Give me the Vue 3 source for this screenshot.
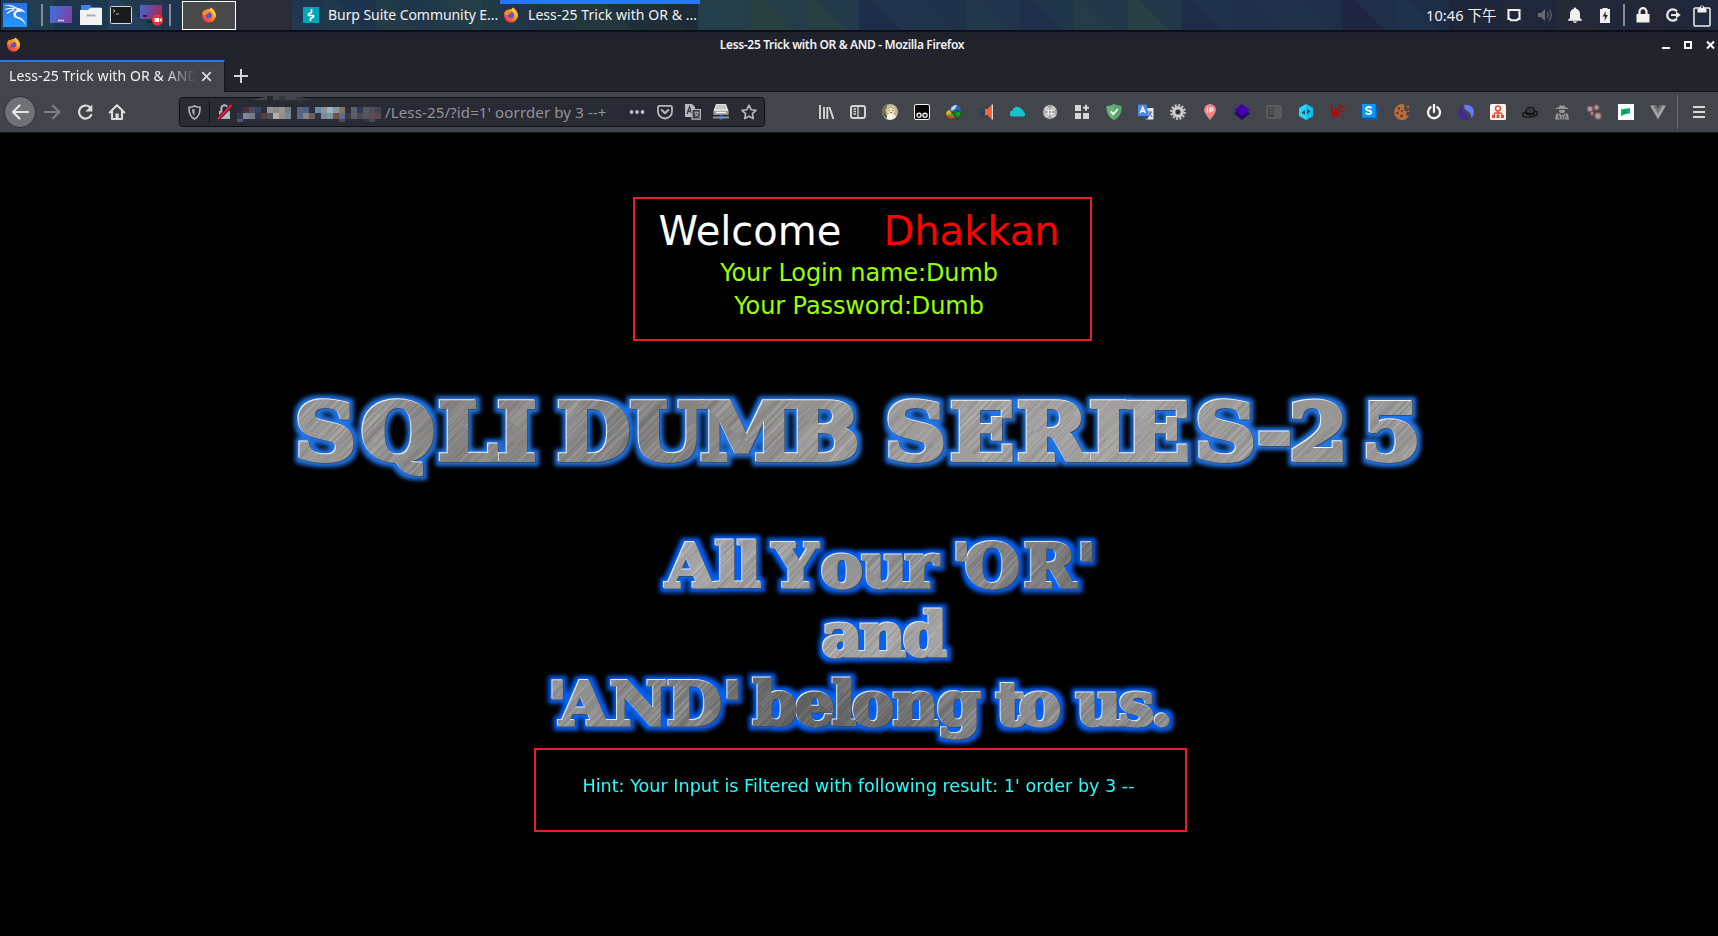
<script setup>
const cells = [
  ['#1f3a55', '#213d50'], ['#1e3350', '#20384c'], ['#24405c', '#213a4c'], ['#1f344d', '#23394a'],
  ['#2a2b38', '#2a2b38'], ['#203a50', '#1f3550'], ['#21394c', '#1e344e'], ['#243c48', '#20364a'],
  ['#203a4a', '#243d47'], ['#223a48', '#20344a'], ['#20343f', '#22373e'], ['#22383d', '#1d313d'],
  ['#1f3039', '#1d2c38'], ['#22404c', '#263e48'], ['#28403f', '#243b48'], ['#273e43', '#223a4b'],
  ['#1e2d4a', '#20344c'], ['#20344b', '#1f3149'], ['#22394b', '#20344b'], ['#1f2e4a', '#20364b'],
  ['#263b48', '#22374a'], ['#283f44', '#23374a'], ['#1f2d49', '#20324b'], ['#1f2f4a', '#203149'],
  ['#20314a', '#1f2f48'], ['#1f2441', '#1f2f4a'], ['#1f324c', '#1f2c48'], ['#20263a', '#1f2639'],
  ['#23273a', '#20273a'], ['#262a36', '#23283a'], ['#20273b', '#242836'], ['#212738', '#20283d'], ['#1f2840', '#1d2540'],
].map((c, i) => ({ x: 1342 - 53.65 * 25 + 53.65 * i, a: c[0], b: c[1] }))

const blurCols = [
  ['#2b2d38', '#35394a', '#4b5a7c'], ['#4f3039', '#7d8597', '#2b3042'], ['#494b5e', '#777b8d', '#2b2d38'],
  ['#36435b', '#343745', '#2b2d38'], ['#2b2d38', '#56413f', '#2b2d38'], ['#929497', '#554f58', '#2b2d38'],
  ['#898a8e', '#b6adab', '#2b2d38'], ['#9a948e', '#988d86', '#2b2d38'], ['#777b88', '#718b9c', '#2b2d38'],
  ['#292b36', '#292b36', '#292b36'], ['#5a6579', '#596780', '#292b36'], ['#44658a', '#898481', '#292b36'],
  ['#2b2d38', '#6d5c5e', '#292b36'], ['#698bae', '#2e3446', '#292b36'], ['#8e9590', '#778e99', '#292b36'],
  ['#9bb5c8', '#7d969e', '#292b36'], ['#8697aa', '#6c5146', '#292b36'], ['#887564', '#66698a', '#4a4b60'],
  ['#2b2d38', '#3b3c45', '#292b36'], ['#58606c', '#5c5f67', '#292b36'], ['#303b51', '#464c58', '#292b36'],
  ['#565763', '#54535b', '#34323b'], ['#4e4f58', '#5a4f55', '#454652'], ['#43454d', '#5a4a4c', '#292b36'],
]

// Brushed-steel grain: thin strokes with pseudo-random spacing and strength
const grain = []
let seed = 7
const rnd = () => (seed = (seed * 16807) % 2147483647) / 2147483647
for (let x = 0; x < 211; x += 0.7 + rnd() * 1.1) {
  grain.push({ x: x.toFixed(2), y: Math.round(rnd() * 40), h: 30 + Math.round(rnd() * 60), w: (0.4 + rnd() * 0.5).toFixed(2), f: rnd() > 0.5 ? '#fff' : '#222', o: (0.05 + rnd() * 0.19).toFixed(2) })
}

const BIG = 1.09
const SUB = 1.05
const place = (xs, k) => xs.map((x) => (x / k).toFixed(2)).join(' ')
const title = place([295, 361, 438, 497, 540, 557, 630, 700, 788, 870, 885, 950, 1017, 1089, 1125, 1195, 1257, 1289, 1362], BIG)
const lines = [
  { y: 587.5, t: "All Your 'OR'", x: [666, 715, 737, 760, 773, 821, 862, 905, 940, 952, 965, 1024, 1077] },
  { y: 656.5, t: 'and', x: [822, 860, 903] },
  { y: 725.5, t: "'AND' belong to us.", x: [548, 560, 610, 667, 723, 740, 753, 795, 832, 852, 893, 937, 985, 996, 1019, 1060, 1076, 1119, 1151] },
].map((l) => ({ ...l, x: place(l.x, SUB) }))

const fox = `<circle cx="8" cy="8.8" r="6.8" fill="url(#ffo)"/><circle cx="7.8" cy="8.2" r="3.1" fill="#5a55c8"/><path d="M1 7C2 4 3 3 4 3l1.400 1.800C7 4.500 8 5.500 8.500 6.500 7 6.200 5.500 7 5.300 8 3.500 8 2 8 1 7z" fill="#ff8a2a"/><path d="M9.600.5C13 2 15.500 6 14.700 10.500 14 9.500 13.500 8.500 12.500 8 12 5.500 9.500 5.500 8.800 3.500 8.500 2.500 9 1.200 9.600.5z" fill="#ffc83c"/>`

const nav = [
  { k: 'back', s: '<circle cx="16" cy="16" r="15.600" fill="#707176" stroke="#303137"/><path d="M24 16H9m6.500-6.500L9 16l6.500 6.500" fill="none" stroke="#e4e4e2" stroke-width="2.200" stroke-linecap="round" stroke-linejoin="round"/>' },
  { k: 'forward', s: '<path d="M9 16h14m-6-6.300L23.300 16 17 22.300" fill="none" stroke="#7f8084" stroke-width="2.100" stroke-linecap="round" stroke-linejoin="round"/>' },
  { k: 'reload', s: '<path d="M22.300 19a6.500 6.500 0 1 1-1.300-7.700" fill="none" stroke="#dcdcdb" stroke-width="2.200" stroke-linecap="round"/><path d="M23.400 8.500v7h-7z" fill="#dcdcdb"/>' },
  { k: 'home', s: '<path d="M8.700 16.500 16 9.300l7.300 7.200M11 15v8h10v-8" fill="none" stroke="#dcdcdb" stroke-width="2.100" stroke-linecap="round" stroke-linejoin="round"/><path d="M14.500 17.500h3.200V23h-3.200z" fill="#dcdcdb"/>' },
]

const urlActions = [
  '<g fill="#bdbdc1"><circle cx="2.500" cy="8" r="1.900"/><circle cx="8" cy="8" r="1.900"/><circle cx="13.500" cy="8" r="1.900"/></g>',
  '<path d="M2.500 1.800h11q1.500 0 1.500 1.500V7.500a7 7 0 0 1-14 0V3.300q0-1.500 1.500-1.500z" fill="none" stroke="#b7b7bb" stroke-width="1.800"/><path d="M4.700 6 8 9.200 11.300 6" fill="none" stroke="#b7b7bb" stroke-width="2" stroke-linecap="round" stroke-linejoin="round"/>',
  '<path d="M0 0h7l3 3v10H0z" fill="#b9b9bd"/><path d="m2 10 2.500-7L7 10M3 7.500h3" fill="none" stroke="#3b3c45" stroke-width="1.300"/><path d="M7 5.500h8.300v9.700H7z" fill="#3b3c45" stroke="#b9b9bd" stroke-width="1.200"/><path d="M9 8.200h4.300q-.5 2.700-3.500 4M10 9q1 2.500 3.500 3.500" fill="none" stroke="#b9b9bd"/>',
  '<path d="M3 0h10l2.300 6v4.500H.7V6z" fill="#dedede"/><path d="M3.500 2h9M3 4h10" stroke="#b0b0b0"/><path d="M.5 7h15v3.500H.5z" fill="#9c9c9f"/><path d="M3 8.500h10" stroke="#f4f4f4" stroke-width="1.300"/><path d="M0 13.500h16" stroke="#8f9093" stroke-width="2"/><circle cx="8" cy="13.500" r="2" fill="#4487e8"/>',
  '<path d="m8 1.200 2.100 4.500 4.900.6-3.600 3.400.9 4.900L8 12.200l-4.300 2.400.9-4.900L1 6.300l4.900-.6z" fill="none" stroke="#b9b9bd" stroke-width="1.600" stroke-linejoin="round"/>',
]

const ext = [
  '<path d="M2 1v14M6 3v12M9.300 3v12M11.300 3l4.200 12" fill="none" stroke="#d4d4d2" stroke-width="1.900"/>',
  '<rect x="1" y="2" width="14" height="12" rx="2" fill="none" stroke="#d4d4d2" stroke-width="2"/><path d="M8 2v12M3.500 5h2.500M3.500 7.500h2.500M3.500 10h2.500" stroke="#d4d4d2" stroke-width="1.300"/>',
  '<circle cx="8" cy="8" r="8" fill="#b9b596"/><path d="M0 9q.5-6 5-8.500L4.500 4 3 6l1 3-2 4Q0 11 0 9z" fill="#6b6f4b"/><circle cx="9" cy="6" r="4.200" fill="#efe3b4"/><path d="M5.500 10.500 9 9.500l4 1.500 1 2q-5 4.500-9.500 1.500z" fill="#f6f1e6"/><path d="m5.500 5 3-2.500L12.500 5M6.500 6.500h1.500m2.500 0h1.500M8 8.500h2" fill="none" stroke="#85835c"/><path d="M2 11l2-1 1 3-1 1.500z" fill="#4f4b36"/>',
  '<rect x=".5" y=".5" width="15" height="15" rx="1.500" fill="#050505" stroke="#f5f5f5"/><circle cx="5" cy="11.200" r="2.100" fill="#222" stroke="#fff" stroke-width="1.200"/><circle cx="11" cy="11.200" r="2.100" fill="#222" stroke="#fff" stroke-width="1.200"/>',
  '<path d="M0 9Q2 5 6 6l1 6-3 1Q0 12 0 9z" fill="#e8b800"/><path d="M0 9.500Q1 15 6.500 15l3-2L7 11 2 12z" fill="#cd3827"/><path d="M1.500 10.500Q4 14 8 12.500l-2-3z" fill="#49a32c"/><circle cx="9.500" cy="6" r="5.400" fill="#3563b4"/><path d="M5 4.500q2-4 6-3.500L9 5 5.500 7z" fill="#b8dcf2"/><path d="M6 8.500 11 8V6l5 3-4.500 6.500-1-3.500z" fill="#16a019" stroke="#073d0a" stroke-width=".7"/>',
  '<path d="M13.500 1v14L9.500 11H6.500V5h3z" fill="#f5643a"/><path d="M14.300 .5v15" stroke="#d9d9d9" stroke-width="1.400"/><circle cx="3" cy="7" r="2.200" fill="none" stroke="#29435a" stroke-width="1.600"/><path d="M5 5.500h2v5H5zM3.500 9.500h2.800v4.500H3.700z" fill="#29435a"/>',
  '<path d="M3 12.500a3 3 0 0 1-.5-6 4.800 4.800 0 0 1 8.700-1.700 3.800 3.800 0 0 1 2.500 3.400 2.200 2.200 0 0 1-.5 4.300z" fill="#18c2c9"/>',
  '<circle cx="8" cy="8" r="7.200" fill="#a9a9a9"/><path d="M6.300 6.300h3.400v3.400H6.300zM6.300 6.300H5A1.500 1.500 0 1 1 6.300 5zM9.700 6.300V5A1.500 1.500 0 1 1 11 6.300zM9.700 9.700H11A1.500 1.500 0 1 1 9.700 11zM6.300 9.700V11A1.500 1.500 0 1 1 5 9.700z" fill="none" stroke="#f0f0f0" stroke-width="1"/>',
  '<path d="M1 1h6v6H1zM1 9h6v6H1zM9 9h6v6H9z" fill="#d6d6d5"/><path d="M12 .7v6M9 3.700h6" stroke="#d6d6d5" stroke-width="2"/>',
  '<path d="M8 0q3 2 7.500 2Q16 12 8 16 0 12 .5 2 5 2 8 0z" fill="#67b279"/><path d="M8 0q3 2 7.500 2Q16 12 8 16z" fill="#5ca66d"/><path d="m4.700 7.500 2.700 2.700L11.700 5" fill="none" stroke="#fff" stroke-width="1.800"/>',
  '<path d="M6 4h9.500v11.500H8z" fill="#e3e5e8"/><path d="M0 .5h8.500L11 12H0z" fill="#4889ef"/><path d="m2.200 9 2.500-6 2.500 6M3 7.300h3.500" fill="none" stroke="#fff" stroke-width="1.400"/><path d="M9 8h5m-1 0q-.5 3-3 4m1-3 3 4" fill="none" stroke="#4668b9"/><path d="M5.500 12H11l-2 3.500z" fill="#204aa3"/>',
  '<circle cx="8" cy="8" r="6.700" fill="none" stroke="#c6c6c6" stroke-width="2.400" stroke-dasharray="2 1.508"/><circle cx="8" cy="8" r="4.300" fill="#5e5e5e" stroke="#cfcfcf" stroke-width="3"/><circle cx="8" cy="8" r="2" fill="#292a2d"/>',
  '<path d="M8 16Q2 9 2 6a6 6 0 0 1 12 0q0 3-6 10z" fill="#f28283"/><path d="M5.500 3.800v4.700M8 8.700V4h1.500a1.300 1.300 0 0 1 0 2.800H8" fill="none" stroke="#fff" stroke-width="1.200"/>',
  '<path d="m8 4 8 5.500L8 16 0 9.500z" fill="#20086e"/><path d="m8 0 8 6-8 6-8-6z" fill="#4400ad"/>',
  '<rect x=".7" y="1.700" width="14.600" height="12.600" rx="2" fill="#595a5b" stroke="#5e5f62" stroke-width="1.200"/><path d="M2 3h6v10H2z" fill="#424347"/><path d="M3 4.500h4M3 7h4M3 9.500h4" stroke="#626264"/>',
  '<path d="m8 0 7 4v8l-7 4-7-4V4z" fill="#21d7ff"/><path d="m8 0 7 4v8l-7 4z" fill="#15bfe9"/><path d="M3.500 8.500 7 6v5zM12.500 7.500 9 10V5z" fill="#293f51"/>',
  '<path d="m.8 2 2.500 11L5.500 5l2.300 8L10 2M0 2h2.500M9 2h3" fill="none" stroke="#aa0b0d" stroke-width="1.700"/><path d="M11.500 3H16M11.500 7H14M11 12.500h3" stroke="#aa0b0d" stroke-width="1.500"/>',
  '<path d="M2 2h14v14H2z" fill="#0560b0"/><path d="M0 0h13.500v13.500H0z" fill="#0798ff"/><path d="M9.500 4.200Q9 3 6.800 3C3 3 3.300 6 6.500 6.500 10.500 7 10 10.200 6.500 10.200 4.500 10.200 4 9 3.800 8.500" fill="none" stroke="#fff" stroke-width="1.800"/>',
  '<path d="M9.500.2a8 8 0 1 0 5.500 12l-2.500-.7-.5-2.500 2-1.500-3.500-.8-.7-2.700 1.200-1.500z" fill="#b96c3a"/><g fill="#603318"><circle cx="5" cy="4.500" r="1.200"/><circle cx="8" cy="7" r="1.100"/><circle cx="3.500" cy="9" r="1.200"/><circle cx="7.500" cy="12" r="1.300"/></g><path d="M13 2h2v2h-2zM14 6.500h1.500V8H14z" fill="#b96c3a"/>',
  '<path d="M4.600 3.300a6 6 0 1 0 6.800 0M8 .5v7.500" fill="none" stroke="#f4f4f4" stroke-width="2.300" stroke-linecap="round"/>',
  '<path d="M4.500 2Q-1.500 6 1 12q3 5 8.500 3.500Q12 14 8.500 11 3 7.500 4.500 2z" fill="#41279b"/><path d="M6.500.8Q14 0 16 7q0 5-3 7 1-4-3-6.500Q5 4.500 6.500.8z" fill="#6779ff"/>',
  '<rect width="16" height="16" rx="1.500" fill="#fff5f1"/><circle cx="8" cy="4.600" r="2.500" fill="none" stroke="#e84d31" stroke-width="1.500"/><path d="M8 7v4M3.500 11.500 5 9h6l1.500 2.500" fill="none" stroke="#e84d31" stroke-width="1.300"/><path d="M2 11h3v3H2zM6.500 11h3v3h-3zM11 11h3v3h-3z" fill="#e84d31"/>',
  '<ellipse cx="8" cy="10" rx="7.700" ry="2.900" fill="none" stroke="#101010" stroke-width="1.300" transform="rotate(-8 8 10)"/><path d="M4 10 4.500 5q0-1.500 3.500-1.500h2q2 0 2 1.500l.5 4.500Q8 12.500 4 10z" fill="#393a3b" stroke="#0f0f0f"/><path d="M4 8q4 2 8.500 0v2.500H4z" fill="#111"/>',
  '<path d="M6 .8 8 2l2-1.200.8 2.200L14 4v1H2V4l3.200-1z" fill="#989898"/><path d="M5 6h6v1.500L9.500 9h-3L5 7.500zM2 10l3-1 3 2.500L11 9l3 1 1 5.500H1z" fill="#989898"/><path d="m4.500 9.500 1.500 6M11.500 9.500l-1.500 6M8 11.500v4M3 13h2m6 0h2" stroke="#4e4e50" stroke-width="1"/>',
  '<g fill="#a1a0a1" stroke="#854e51" stroke-width="1.300"><circle cx="4" cy="5" r="3"/><circle cx="10.500" cy="3.500" r="2.600"/><circle cx="6" cy="9.500" r="1.800"/><circle cx="12" cy="12" r="3.300"/></g>',
  '<path d="M0 0h16v16H0z" fill="#fff"/><path d="m3 5.200 9-1.200v5.500l-5 .8-4 2z" fill="#12b870"/><path d="m5 7.200 5-.6M5 9l4-.4" stroke="#087b4b"/>',
  '<path d="M0 1.500h6l2 4 2-4h6L8 15.500z" fill="#a2a2a3"/><path d="M3.200 1.500H6l2 4 2-4h2.800L8 10z" fill="#707174"/>',
]

const tray = [
  '<path d="M2.500 3h11v9h-1.500l-1 1.200H5L4 12H2.500z" fill="none" stroke="#f0f0ee" stroke-width="2.100"/>',
  '<path d="M1 6h3l4-4v12l-4-4H1z" fill="#676a73"/><path d="M10 5q2.500 3 0 6M12 2.500q4.500 5.500 0 11" fill="none" stroke="#50535d" stroke-width="1.700"/>',
  '<path d="M8 .5q1.200 0 1.200 1.300Q13 3 13 7v4l2 2v.8H1V13l2-2V7q0-4 3.800-5.200Q6.800.5 8 .5zM6 14.300h4q-.4 1.600-2 1.600t-2-1.600z" fill="#f0f0ee"/>',
  '<path d="M3 2h2.500V1h5v1H13v14H3z" fill="#f0f0ee"/><path d="M9 4 5.500 9.500H8L7.500 14 11 8H8.500z" fill="#23283a"/>',
]
const tray2 = [
  '<path d="M1.500 7h13v8.500h-13z" fill="#f0f0ee"/><path d="M4.500 8V4.700a3.500 3.500 0 0 1 7 0V8" fill="none" stroke="#f0f0ee" stroke-width="2.200"/>',
  '<path d="M12 4.300A5.600 5.600 0 1 0 12 11.700" fill="none" stroke="#e8e8e7" stroke-width="2.300"/><path d="M6 7h5V4.500L15.800 8 11 11.500V9H6z" fill="#e8e8e7"/>',
]
</script>

<template>
  <div class="screen">
    <svg class="defs" width="0" height="0">
      <defs>
        <linearGradient id="ffo" x1="1" y1="0" x2="0" y2="1">
          <stop offset="0" stop-color="#ffd23c" /><stop offset=".45" stop-color="#ff8a25" /><stop offset=".8" stop-color="#fb3c46" /><stop offset="1" stop-color="#e32a72" />
        </linearGradient>
        <linearGradient id="desk" x1="0" y1="0" x2="1" y2=".3">
          <stop offset="0" stop-color="#3a74e0" /><stop offset="1" stop-color="#7a45a8" />
        </linearGradient>
        <linearGradient id="rec" x1="0" y1="0" x2="1" y2=".3">
          <stop offset="0" stop-color="#3a6ae0" /><stop offset="1" stop-color="#a02a5a" />
        </linearGradient>
        <linearGradient id="kali" x1="0" y1="0" x2="0" y2="1">
          <stop offset="0" stop-color="#2a6fe8" /><stop offset="1" stop-color="#2498ff" />
        </linearGradient>
      </defs>
    </svg>

    <header class="panel">
      <svg class="wall" width="1718" height="30">
        <g v-for="c in cells" :key="c.x">
          <rect :x="c.x" y="0" width="54.500" height="30" :fill="c.b" />
          <polygon :points="`${c.x},0 ${c.x + 12},0 ${c.x + 42},30 ${c.x},30`" :fill="c.a" />
        </g>
      </svg>
      <div class="launch">
        <svg width="24" height="24" viewBox="0 0 24 24"><path d="M0 0h24v24H0z" fill="url(#kali)" /><path d="M1 2.500Q8 .5 13.500 4.500L17 5.500q4 1 5.500 4.500L19 8.500l-4.500.5Q11.500 11 14 13.500q7 1 9 9Q20 17 14.500 15.500 9.500 14.500 10.500 10 11.500 7.500 14 6.500 8 2.500 1 2.500z" fill="#eef5ff" /><path d="M2 6.500q6-2 10-.5M4 10.500q3-3 7-3.500" fill="none" stroke="#eef5ff" stroke-width="1.300" /></svg>
        <i class="sep s1"></i>
        <svg width="22" height="18" viewBox="0 0 22 18"><path d="M0 0h22v17H0z" fill="url(#desk)" /><path d="M8 14.500h6" stroke="#fff" stroke-width="1.600" stroke-dasharray="1.500 .8" /></svg>
        <svg width="22" height="20" viewBox="0 0 22 20"><path d="M1 0h9l2 2h9v7H1z" fill="#3b83ee" /><path d="M0 5h8l2-2h12v17H0z" fill="#f2f2f2" /><path d="M6.500 10.500h9" stroke="#aaa" stroke-width="2" /></svg>
        <svg width="22" height="18" viewBox="0 0 22 18"><rect x=".5" y=".5" width="21" height="17" rx="1" fill="#191b1d" stroke="#d6d6d6" /><path d="m3 3.500 2 1.500-2 1.500M6 8h3" fill="none" stroke="#bbb" /></svg>
        <svg width="24" height="21" viewBox="0 0 24 21"><path d="M0 0h22v14H0z" fill="url(#rec)" /><path d="M7 17h7M3 11h4" stroke="#1c2230" stroke-width="2" /><circle cx="17.500" cy="15" r="5.700" fill="#ee2f37" /><path d="M14.500 13h4.500v4h-4.500zM19 15l2.500-2v4z" fill="#fff" /></svg>
        <i class="sep s2"></i>
      </div>
      <div class="wsbtn"><svg width="16" height="16" viewBox="0 0 16 16" v-html="fox"></svg></div>
      <div class="gap"></div>
      <div class="task burp">
        <svg width="16" height="16" viewBox="0 0 16 16"><path d="M0 0h16v16H0z" fill="#02a4ba" /><path d="M8.500 2v3.500L5.500 7v1.500l5 0V10L7.500 11.500V14" fill="none" stroke="#fff" stroke-width="1.700" /></svg>
        <span class="t-burp">Burp Suite Community E...</span>
      </div>
      <div class="task active">
        <svg width="16" height="16" viewBox="0 0 16 16" v-html="fox"></svg>
        <span class="t-less">Less-25 Trick with OR &amp; ...</span>
      </div>
      <div class="tray">
        <span class="clock">10:46 下午</span>
        <svg v-for="(s, i) in tray" :key="i" :class="'tr' + i" width="16" height="16" viewBox="0 0 16 16" v-html="s"></svg>
        <i class="sep s3"></i>
        <svg v-for="(s, i) in tray2" :key="'b' + i" :class="'tq' + i" width="16" height="16" viewBox="0 0 16 16" v-html="s"></svg>
        <svg class="clip" width="18" height="23" viewBox="0 0 18 23"><rect x="1" y="4" width="16" height="18" rx="1" fill="none" stroke="#eee" stroke-width="1.500" /><path d="M4.500 4.500h2.200a2.400 2.400 0 1 1 4.600 0h2.200v4h-9z" fill="#eee" /><circle cx="9" cy="3" r="1" fill="#222a40" /></svg>
      </div>
    </header>

    <div class="titlebar">
      <svg class="tfox" width="15" height="15" viewBox="0 0 16 16" v-html="fox"></svg>
      <span class="wtitle">Less-25 Trick with OR &amp; AND - Mozilla Firefox</span>
      <svg class="winbtns" width="54" height="12" viewBox="0 0 54 12"><g fill="none" stroke="#fafafa" stroke-width="2"><path d="M1 9h8M24 3h6v6h-6z" /><path d="m46 2.500 7 7m0-7-7 7" /></g></svg>
    </div>

    <div class="tabs">
      <div class="tab">
        <span class="ttext">Less-25 Trick with OR &amp; AND</span>
        <svg width="11" height="11" viewBox="0 0 11 11"><path d="m1.200 1.200 8.600 8.600m0-8.600L1.200 9.800" stroke="#d8d8d8" stroke-width="1.800" /></svg>
      </div>
      <svg class="plus" width="14" height="14" viewBox="0 0 14 14"><path d="M7 0v14M0 7h14" stroke="#d4d4d4" stroke-width="2" /></svg>
    </div>

    <div class="toolbar">
      <div class="nav">
        <svg v-for="n in nav" :key="n.k" :class="n.k" width="32" height="32" viewBox="0 0 32 32" v-html="n.s"></svg>
      </div>
      <div class="url">
        <svg class="shield" width="13" height="15" viewBox="0 0 13 15"><path d="M1 2.300Q4 2.300 6.500 1 9 2.300 12 2.300 12.300 11 6.500 14 .7 11 1 2.300z" fill="none" stroke="#b7b7bb" stroke-width="1.600" /><path d="M4 4.600 6.500 4v7Q4 9 4 4.600z" fill="#b7b7bb" /></svg>
        <i class="usep"></i>
        <svg class="lock" width="16" height="16" viewBox="0 0 16 16"><path d="M2 7h11v8H2z" fill="#b7b7bb" /><path d="M4.300 7V4.500a3.200 3.200 0 0 1 6.400 0V7" fill="none" stroke="#b7b7bb" stroke-width="2" /><path d="M1 15 14.500 1" stroke="#282a34" stroke-width="4" /><path d="M1 15 14.500 1" stroke="#ff1447" stroke-width="1.900" /></svg>
        <svg class="mosaic" width="148" height="36" viewBox="0 0 148 36">
          <path d="M15 6Q40-2 74 6z" fill="#43454c" />
          <path d="M30 2h6v5h-6z" fill="#25262e" /><path d="M42 2h6v5h-6zM60 3h6v5h-6z" fill="#34353e" />
          <g v-for="(c, i) in blurCols" :key="i"><rect v-for="(f, j) in c" :key="j" :x="i * 6" :y="[13, 19, 25][j]" width="6.100" :height="[6.1, 6.1, 3][j]" :fill="f" /></g>
        </svg>
        <span class="utext">/Less-25/?id=1' oorrder by 3 --+</span>
        <div class="acts"><svg v-for="(s, i) in urlActions" :key="i" width="16" height="16" viewBox="0 0 16 16" v-html="s"></svg></div>
      </div>
      <div class="exts"><svg v-for="(s, i) in ext" :key="i" width="16" height="16" viewBox="0 0 16 16" v-html="s"></svg></div>
      <i class="msep"></i>
      <svg class="menu" width="12" height="12" viewBox="0 0 12 12"><path d="M0 1h12M0 6h12M0 11h12" stroke="#d7d8d3" stroke-width="2" /></svg>
    </div>

    <main class="page">
      <section class="welcome">
        <h1>Welcome<span>Dhakkan</span></h1>
        <p>Your Login name:Dumb</p>
        <p>Your Password:Dumb</p>
      </section>

      <svg class="metal" width="1718" height="407" viewBox="0 341 1718 407">
        <defs>
          <pattern id="brush" width="211" height="130" patternUnits="userSpaceOnUse" patternTransform="rotate(42)">
            <rect v-for="(g, i) in grain" :key="i" :x="g.x" :y="g.y" :width="g.w" :height="g.h" :fill="g.f" :opacity="g.o" />
            <rect v-for="(g, i) in grain" :key="'s' + i" :x="211 - g.x" y="75" :width="g.w" height="55" :fill="g.f" :opacity="g.o" />
          </pattern>
          <linearGradient id="g1" gradientUnits="userSpaceOnUse" x1="298" y1="400" x2="1420" y2="460">
            <stop offset="0" stop-color="#9a9896" /><stop offset=".11" stop-color="#858382" /><stop offset=".2" stop-color="#8d8b8a" /><stop offset=".25" stop-color="#7f7d7c" /><stop offset=".42" stop-color="#9a9896" /><stop offset=".6" stop-color="#a4a2a0" /><stop offset=".85" stop-color="#989694" /><stop offset="1" stop-color="#a09e9c" />
          </linearGradient>
          <linearGradient id="g2" gradientUnits="userSpaceOnUse" x1="664" y1="542" x2="1090" y2="588">
            <stop offset="0" stop-color="#a5a5a5" /><stop offset=".5" stop-color="#8c8c8c" /><stop offset=".8" stop-color="#7b7b7b" /><stop offset=".93" stop-color="#616161" /><stop offset="1" stop-color="#777" />
          </linearGradient>
          <linearGradient id="g3" gradientUnits="userSpaceOnUse" x1="551" y1="680" x2="1168" y2="726">
            <stop offset="0" stop-color="#929292" /><stop offset=".2" stop-color="#787878" /><stop offset=".34" stop-color="#5f5f5f" /><stop offset=".5" stop-color="#6d6d6d" /><stop offset=".7" stop-color="#8e8e8e" /><stop offset="1" stop-color="#858585" />
          </linearGradient>
          <pattern id="steel" width="1718" height="900" patternUnits="userSpaceOnUse">
            <rect width="1718" height="500" fill="url(#g1)" /><rect y="500" width="1718" height="105" fill="url(#g2)" /><rect y="605" width="1718" height="62" fill="#a4a4a4" /><rect y="667" width="1718" height="233" fill="url(#g3)" /><rect width="1718" height="900" fill="url(#brush)" />
          </pattern>
          <filter id="glow" filterUnits="userSpaceOnUse" x="250" y="341" width="1220" height="420" color-interpolation-filters="sRGB">
            <feMorphology in="SourceAlpha" operator="dilate" radius="4" result="fat" />
            <feGaussianBlur in="fat" stdDeviation="2" result="soft" />
            <feFlood flood-color="#1f74e8" /><feComposite in2="soft" operator="in" result="halo" />
            <feOffset in="SourceAlpha" dx="1" dy="1" result="lo" /><feFlood flood-color="#36506f" /><feComposite in2="lo" operator="in" result="dark" />
            <feOffset in="SourceAlpha" dx="-1" dy="-1" result="hi" /><feFlood flood-color="#f2f6ff" /><feComposite in2="hi" operator="in" result="light" />
            <feMerge><feMergeNode in="halo" /><feMergeNode in="dark" /><feMergeNode in="light" /><feMergeNode in="SourceGraphic" /></feMerge>
          </filter>
          <filter id="glow2" filterUnits="userSpaceOnUse" x="500" y="500" width="720" height="260" color-interpolation-filters="sRGB">
            <feMorphology in="SourceAlpha" operator="dilate" radius="4" result="fat" />
            <feGaussianBlur in="fat" stdDeviation="2" result="soft" />
            <feFlood flood-color="#0062ff" /><feComposite in2="soft" operator="in" result="halo" />
            <feOffset in="SourceAlpha" dx="1" dy="1" result="lo" /><feFlood flood-color="#3c4a63" /><feComposite in2="lo" operator="in" result="dark" />
            <feOffset in="SourceAlpha" dx="-1" dy="-1" result="hi" /><feFlood flood-color="#e6eefc" /><feComposite in2="hi" operator="in" result="light" />
            <feMerge><feMergeNode in="halo" /><feMergeNode in="dark" /><feMergeNode in="light" /><feMergeNode in="SourceGraphic" /></feMerge>
          </filter>
        </defs>
        <g filter="url(#glow)">
          <text class="big" :transform="`scale(${BIG} 1)`" y="460" :x="title">SQLI DUMB SERIES-25</text>
        </g>
        <g filter="url(#glow2)">
          <text v-for="l in lines" :key="l.y" class="sub" :transform="`scale(${SUB} 1)`" :y="l.y" :x="l.x">{{ l.t }}</text>
        </g>
      </svg>

      <section class="hint">Hint: Your Input is Filtered with following result: 1' order by 3 --</section>
    </main>
  </div>
</template>

<style>
html, body { margin: 0; background: #000; overflow: hidden; }
</style>

<style scoped>
.screen { width: 1718px; height: 936px; background: #000; overflow: hidden; display: flex; flex-direction: column; font-family: "Noto Sans", "Noto Sans CJK SC", sans-serif; color: #f2f2f2; }
.screen svg { display: block; flex: none; }
.screen span { white-space: nowrap; }
.defs { position: absolute; }
.panel { height: 30px; position: relative; display: flex; align-items: center; flex: none; }
.wall { position: absolute; left: 0; top: 0; }
.panel > div { position: relative; }
.launch { width: 182px; height: 30px; display: flex; align-items: center; gap: 8px; padding-left: 3px; box-sizing: border-box; }
.sep { width: 2px; height: 22px; background: #898c98; flex: none; }
.s1 { margin: 0 -1px 0 6px; }
.s2 { margin-left: -3px; }
.wsbtn { width: 54px; height: 29px; box-sizing: border-box; border: 1px solid #fff; background: #494949; display: flex; align-items: center; justify-content: center; flex: none; }
.gap { width: 56px; height: 30px; background: #2c2c37; flex: none; }
.task { height: 30px; box-sizing: border-box; display: flex; align-items: center; font-size: 14px; }
.task span, .clock { padding-bottom: 1px; }
.burp { width: 208px; padding-left: 11px; gap: 9px; }
.active { width: 200px; padding-left: 3px; gap: 9px; border-top: 4px solid #2777ff; padding-bottom: 4px; }
.t-burp { letter-spacing: -0.06px; }
.t-less { letter-spacing: 0.06px; }
.tray { margin-left: auto; width: 292px; height: 30px; display: flex; align-items: center; }
.clock { font-size: 14.5px; letter-spacing: 0.1px; width: 80px; }
.tr0 { margin-right: 15px; } .tr1 { margin-right: 14px; } .tr2 { margin-right: 14px; } .tr3 { margin-right: 10px; }
.s3 { margin-right: 10px; } .tq0 { margin-right: 14px; } .tq1 { margin-right: 12px; }
.titlebar { height: 30px; background: linear-gradient(#1f2029, #22242c 14px); border-top: 2px solid #0f1017; box-sizing: border-box; position: relative; display: flex; align-items: center; justify-content: space-between; padding: 0 3px 3px 6px; flex: none; }
.wtitle { font-size: 12px; font-weight: 600; letter-spacing: -0.34px; margin-right: 37px; }
.tfox { margin-right: 39px; }
.tabs { height: 32px; box-sizing: border-box; background: #22242c; display: flex; align-items: center; flex: none; border-bottom: 1px solid #15161c; }
.tab { width: 225px; height: 32px; box-sizing: border-box; margin-bottom: -1px; background: #43454c; border-top: 2px solid #2777ff; display: flex; align-items: center; padding: 0 12px 1px 9px; justify-content: space-between; border-right: 1px solid #15161c; }
.ttext { width: 187px; overflow: hidden; font-size: 14px; letter-spacing: 0.1px; padding-bottom: 2px; -webkit-mask-image: linear-gradient(90deg, #000 155px, transparent 187px); mask-image: linear-gradient(90deg, #000 155px, transparent 187px); }
.plus { margin-left: 9px; }
.toolbar { height: 41px; box-sizing: border-box; background: #43454c; border-bottom: 1px solid #16171b; display: flex; align-items: center; flex: none; }
.nav { width: 175px; display: flex; padding-left: 4px; flex: none; }
.forward { margin-right: 1px; }
.url { width: 586px; height: 30px; box-sizing: border-box; border: 1px solid #101116; border-radius: 4px; background: #282a34; display: flex; align-items: center; flex: none; }
.shield { margin-left: 8px; }
.usep { width: 1px; height: 22px; background: #101116; margin: 0 7px 0 8px; }
.lock { margin-right: 4px; }
.mosaic { margin: -4px 0; overflow: visible; }
.utext { font-size: 15px; letter-spacing: 0.14px; color: #939499; width: 244px; }
.acts { display: flex; gap: 12px; }
.exts { display: flex; gap: 16px; margin-left: 53px; }
.msep { width: 1px; height: 34px; background: #6f7075; margin: 0 15px 0 11px; }
.page { flex: 1; display: flex; flex-direction: column; align-items: center; font-family: "DejaVu Sans", sans-serif; }
.welcome { margin: 64px 0 0 7px; width: 459px; height: 144px; box-sizing: border-box; border: 2px solid #ed1c24; padding-right: 7px; text-align: center; flex: none; }
h1 { margin: 8px 0 2px; font-size: 40px; line-height: 48px; font-weight: 400; color: #fff; white-space: nowrap; }
h1 span { color: #f00; margin-left: 42px; }
.welcome p { margin: 0; font-size: 24px; letter-spacing: -0.1px; line-height: 33px; color: #9f0; }
.metal { overflow: visible; }
.big, .sub { font-family: "DejaVu Serif", serif; font-weight: 700; fill: url(#steel); stroke: url(#steel); stroke-linejoin: miter; white-space: pre; }
.big { font-size: 78px; stroke-width: 4px; }
.sub { font-size: 60px; stroke-width: 3px; }
.hint { width: 653px; height: 84px; box-sizing: border-box; margin-left: 3px; border: 2px solid #ed1c24; padding-right: 4px; font-size: 17.600px; line-height: 73px; text-align: center; color: #21ffff; flex: none; position: relative; white-space: nowrap; }
</style>
